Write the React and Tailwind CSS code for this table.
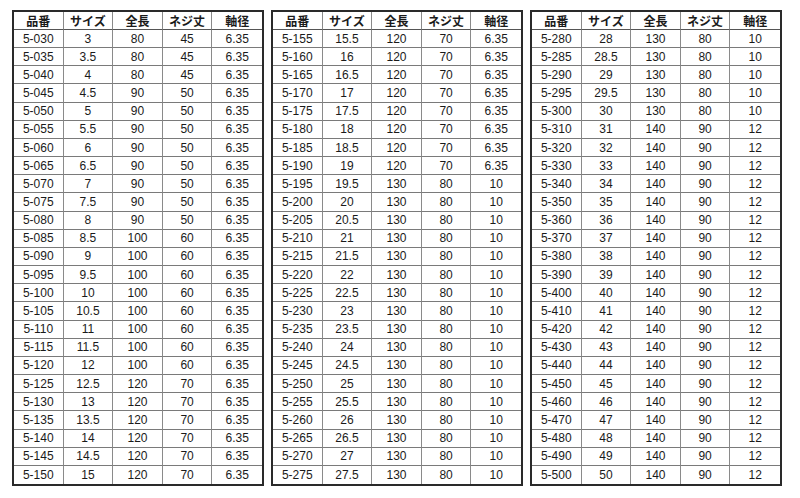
import React from "react";

const fmt = (v) => (Number.isInteger(v) ? String(v) : v.toFixed(1));
const code = (n) => "5-" + String(n).padStart(3, "0");

function t1() {
  const rows = [];
  for (let n = 30; n <= 150; n += 5) {
    const s = n / 10;
    let L, N;
    if (s <= 4) { L = 80; N = 45; }
    else if (s <= 8) { L = 90; N = 50; }
    else if (s <= 12) { L = 100; N = 60; }
    else { L = 120; N = 70; }
    rows.push([code(n), fmt(s), L, N, "6.35"]);
  }
  return rows;
}
function t2() {
  const rows = [];
  for (let n = 155; n <= 275; n += 5) {
    const s = n / 10;
    if (s <= 19) rows.push([code(n), fmt(s), 120, 70, "6.35"]);
    else rows.push([code(n), fmt(s), 130, 80, "10"]);
  }
  return rows;
}
function t3() {
  const rows = [];
  [280, 285, 290, 295, 300].forEach((n) => rows.push([code(n), fmt(n / 10), 130, 80, "10"]));
  for (let n = 310; n <= 500; n += 10) rows.push([code(n), fmt(n / 10), 140, 90, "12"]);
  return rows;
}

const headers = ["品番", "サイズ", "全長", "ネジ丈", "軸径"];

function Table({ rows }) {
  return (
    <div className="w-[252px] h-[476px] border-2 border-[#2a2a2a] grid grid-cols-5 grid-rows-[18px_repeat(25,minmax(0,1fr))]">
      {headers.map((h, i) => (
        <div
          key={"h" + i}
          className={`flex items-center justify-center border-b border-[#555] ${i < 4 ? "border-r border-r-[#8a8a8a]" : ""} text-[12px] font-bold text-[#1a1a1a] [font-family:'Noto_Sans_CJK_JP',sans-serif] leading-none`}
        >
          {h}
        </div>
      ))}
      {rows.map((r, ri) =>
        r.map((c, ci) => (
          <div
            key={ri + "-" + ci}
            className={`flex items-center justify-center ${ri < rows.length - 1 ? "border-b border-[#7a7a7a]" : ""} ${ci < 4 ? "border-r border-r-[#8a8a8a]" : ""} text-[12px] text-[#1a1a1a] [font-family:'Liberation_Sans',Arial,sans-serif] leading-none`}
          >
            {c}
          </div>
        ))
      )}
    </div>
  );
}

export default function App() {
  return (
    <div className="w-[800px] h-[498px] bg-white pl-[12px] pt-[10px] flex gap-[7px] items-start">
      <Table rows={t1()} />
      <Table rows={t2()} />
      <Table rows={t3()} />
    </div>
  );
}
